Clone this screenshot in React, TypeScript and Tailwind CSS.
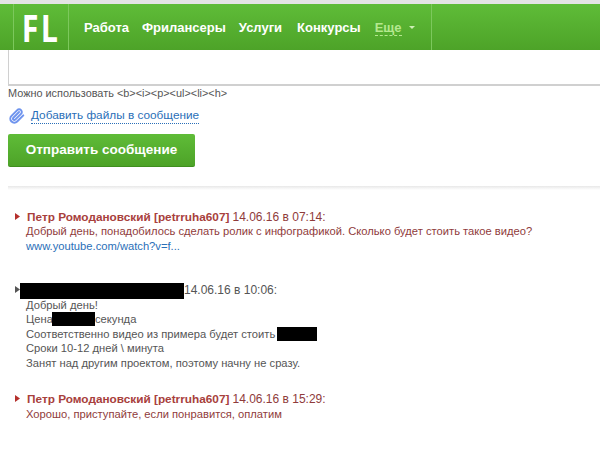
const font = "font-['Liberation_Sans',sans-serif]";

const Marker = ({ color }: { color: string }) => (
  <svg width="5" height="7" viewBox="0 0 5 7" className="absolute left-[-12px] top-[3px]">
    <path d="M0 0L5 3.5L0 7Z" fill={color} />
  </svg>
);

const Black = ({ className }: { className: string }) => <span className={`inline-block bg-black align-top ${className}`} />;

const Name = () => <b className="text-[11.8px] text-[#a8403c]">Петр Ромодановский [petrruha607]</b>;

const App = () => {
  return (
    <div className={`w-[600px] h-[459px] overflow-hidden bg-white ${font}`}>
      <div className="h-[4px] bg-[#e4e4e4]" />
      <header className="h-[46px] flex bg-gradient-to-b from-[#5fbc38] to-[#4da328] text-white">
        <div className="w-[14px] border-r border-[#7cc85c]" />
        <div className="w-[55px] border-r border-[#7cc85c]">
          <div className="h-full flex items-center justify-center pb-[1px] font-['Open_Sans',sans-serif] font-bold text-[38px] tracking-[3px] leading-none scale-x-[0.8]">
            FL
          </div>
        </div>
        <nav className="w-[363px] border-r border-[#7cc85c] pl-[15px] flex items-center gap-[13px] text-[13px] font-bold pt-[1px]">
          <span>Работа</span>
          <span>Фрилансеры</span>
          <span>Услуги</span>
          <span className="ml-[2px]">Конкурсы</span>
          <span className="ml-[1px] text-[#b5e88f] border-b border-dashed border-[#b5e88f] leading-[15px]">Еще</span>
          <span className="w-0 h-0 -ml-[6px] border-x-[3px] border-x-transparent border-t-[3px] border-t-[#cdeeb5]" />
        </nav>
      </header>
      <div className="ml-[8px] h-[36px] border-l border-b-2 border-[#d0d0d0]" />
      <p className="ml-[8px] text-[10.9px] leading-[14px] text-[#555]">
        Можно использовать &lt;b&gt;&lt;i&gt;&lt;p&gt;&lt;ul&gt;&lt;li&gt;&lt;h&gt;
      </p>
      <div className="ml-[9px] mt-[8px] flex items-center gap-[6px]">
        <svg width="16" height="16" viewBox="0 0 24 24" fill="none" stroke="#6f94ee" strokeWidth="3" strokeLinecap="round" strokeLinejoin="round">
          <path d="m21.44 11.05-9.19 9.19a6 6 0 0 1-8.49-8.49l8.57-8.57A4 4 0 1 1 18 8.84l-8.59 8.57a2 2 0 0 1-2.83-2.83l8.49-8.48" />
        </svg>
        <span className="text-[11.8px] leading-[15px] text-[#2a6fb8] border-b border-dotted border-[#2a6fb8]">Добавить файлы в сообщение</span>
      </div>
      <button className="ml-[8px] mt-[10px] block w-[187px] h-[33px] rounded-[2px] bg-gradient-to-b from-[#5fbc38] to-[#4da328] border-b border-[#3f8f1f] text-white font-bold text-[13.5px]">
        Отправить сообщение
      </button>
      <div className="ml-[8px] mt-[19px] h-[4px] bg-gradient-to-b from-[#e8e8e8] to-white" />
      <div className="ml-[27px] mt-[20px] text-[11.2px] leading-[14.5px] text-[#8f3b3b]">
        <div className="relative">
          <Marker color="#b5302c" />
          <Name /> <span className="text-[12px]">14.06.16 в 07:14:</span>
        </div>
        <div className="-mt-[1px] -ml-[1px]">Добрый день, понадобилось сделать ролик с инфографикой. Сколько будет стоить такое видео?</div>
        <div className="-ml-[1px] text-[#2a6fb8] mt-[1px]">www.youtube.com/watch?v=f...</div>

        <div className="relative mt-[29px] text-[#555] text-[12px] flex">
          <Marker color="#555" />
          <Black className="-ml-[7px] w-[164px] h-[16px]" />
          14.06.16 в 10:06:
        </div>
        <div className="-ml-[1px] -mt-[1px] text-[#555]">
          <div>Добрый день!</div>
          <div className="flex">Цена&nbsp;<Black className="-ml-[4px] w-[43px] h-[14px]" />секунда</div>
          <div className="flex">Соответственно видео из примера будет стоить&nbsp;<Black className="-ml-[1px] w-[40px] h-[14px]" /></div>
          <div>Сроки 10-12 дней \ минута</div>
          <div>Занят над другим проектом, поэтому начну не сразу.</div>
        </div>

        <div className="relative mt-[22px]">
          <Marker color="#b5302c" />
          <Name /> <span className="text-[12px]">14.06.16 в 15:29:</span>
        </div>
        <div className="-ml-[1px]">Хорошо, приступайте, если понравится, оплатим</div>
      </div>
    </div>
  );
};

export default App;
